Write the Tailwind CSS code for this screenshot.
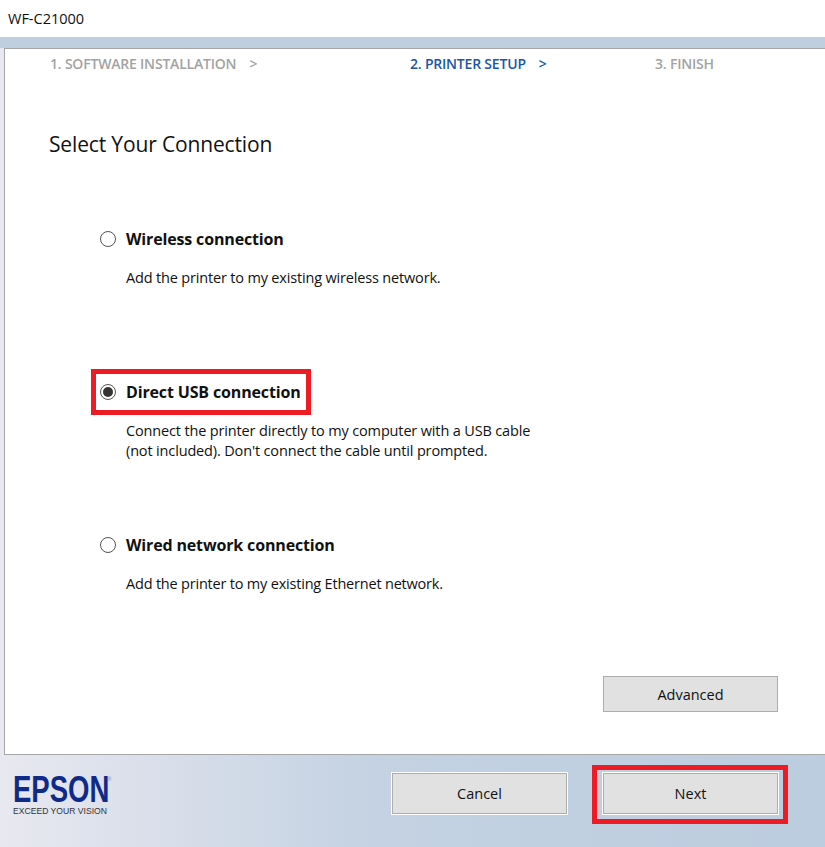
<!DOCTYPE html>
<html lang="en">
<head>
    <meta charset="UTF-8">
    <meta name="viewport" content="width=device-width, initial-scale=1.0">
    <title>WF-C21000</title>
    <script src="https://cdn.jsdelivr.net/npm/@tailwindcss/browser@4"></script>
</head>
<body class="w-[825px] h-[847px] overflow-hidden bg-white font-['Open_Sans','Noto_Sans',sans-serif] text-[#111]">
    <!-- Title bar -->
    <div class="h-[37px] pl-2 flex items-center text-[14.5px]">WF-C21000</div>

    <div class="h-[810px] flex flex-col bg-gradient-to-r from-[#e8e8f0] via-[#c4d2e2] via-45% to-[#bccddf]">
        <div class="h-[11px] bg-[#bfcfdf]"></div>

        <!-- Main panel -->
        <div class="relative h-[707px] ml-1 bg-white border-t border-l border-b border-[#a6a6a6]">
            <!-- Steps -->
            <div class="flex pt-[3px] h-[26px] items-center text-[14px] font-semibold text-[#a3a3a3] tracking-[-0.2px]">
                <div class="w-[405px] pl-[45px] flex"><span>1. SOFTWARE INSTALLATION</span><span class="ml-[13px]">&gt;</span></div>
                <div class="w-[245px] flex text-[#1a56a6]"><span>2. PRINTER SETUP</span><span class="ml-[13px]">&gt;</span></div>
                <div>3. FINISH</div>
            </div>

            <h1 class="mt-[53px] pl-[44px] text-[21px] leading-[32px] tracking-[-0.15px]">Select Your Connection</h1>

            <!-- Options -->
            <div class="mt-[66px] pl-[95px] flex flex-col">
                <div class="h-[153px]">
                    <label class="flex items-center gap-[10px] h-[26px]">
                        <span class="w-4 h-4 rounded-full border border-[#555] bg-white"></span>
                        <span class="text-[16px] font-bold tracking-[-0.15px]">Wireless connection</span>
                    </label>
                    <p class="mt-[16px] ml-[26px] text-[14.5px] leading-[20px] tracking-[-0.17px]">Add the printer to my existing wireless network.</p>
                </div>
                <div class="h-[153px]">
                    <label class="flex items-center gap-[10px] h-[26px]">
                        <span class="w-4 h-4 rounded-full border border-[#555] bg-white flex items-center justify-center"><span class="w-[10px] h-[10px] rounded-full bg-[#333]"></span></span>
                        <span class="text-[16px] font-bold tracking-[-0.15px]">Direct USB connection</span>
                    </label>
                    <p class="mt-[16px] ml-[26px] text-[14.5px] leading-[20px] tracking-[-0.15px]">Connect the printer directly to my computer with a USB cable<br>(not included). Don't connect the cable until prompted.</p>
                </div>
                <div>
                    <label class="flex items-center gap-[10px] h-[26px]">
                        <span class="w-4 h-4 rounded-full border border-[#555] bg-white"></span>
                        <span class="text-[16px] font-bold tracking-[-0.15px]">Wired network connection</span>
                    </label>
                    <p class="mt-[16px] ml-[26px] text-[14.5px] leading-[20px] tracking-[-0.2px]">Add the printer to my existing Ethernet network.</p>
                </div>
            </div>

            <div class="absolute left-[598px] top-[627px] w-[175px] h-[36px] pt-px flex items-center justify-center bg-[#e1e1e1] border border-[#adadad] text-[14.5px] outline outline-1 outline-white">Advanced</div>

            <!-- Red annotation round the USB option -->
            <div class="absolute left-[86px] top-[320px] w-[220px] h-[46px] border-[5px] border-[#ed1c24]"></div>
        </div>

        <!-- Footer -->
        <div class="relative flex-1 flex items-start pl-[13px]">
            <div class="pt-[20px] w-[379px] flex flex-col">
                <div class="relative h-[29px]">
                    <span class="block origin-left scale-x-[.765] font-['Liberation_Sans'] font-bold text-[#0f2b87] text-[36px] leading-[29px]">EPSON</span>
                    <span class="absolute left-[94px] top-[1px] text-[6px] leading-[6px] text-[#7a88b0] font-['Liberation_Sans']">®</span>
                </div>
                <span class="mt-[1px] font-['Liberation_Sans'] text-[8.6px] leading-[12px] text-[#333]">EXCEED YOUR VISION</span>
            </div>
            <div class="mt-[18px] flex gap-[36px]">
                <div class="w-[175px] h-[41px] flex items-center justify-center bg-[#e1e1e1] border border-[#adadad] text-[14.5px] outline outline-1 outline-white">Cancel</div>
                <div class="w-[175px] h-[41px] flex items-center justify-center bg-[#e1e1e1] border border-[#adadad] text-[14.5px] outline outline-1 outline-white">Next</div>
            </div>
            <!-- Red annotation round Next -->
            <div class="absolute left-[592px] top-[10px] w-[196px] h-[59px] border-[5px] border-[#ed1c24]"></div>
        </div>
    </div>
</body>
</html>
